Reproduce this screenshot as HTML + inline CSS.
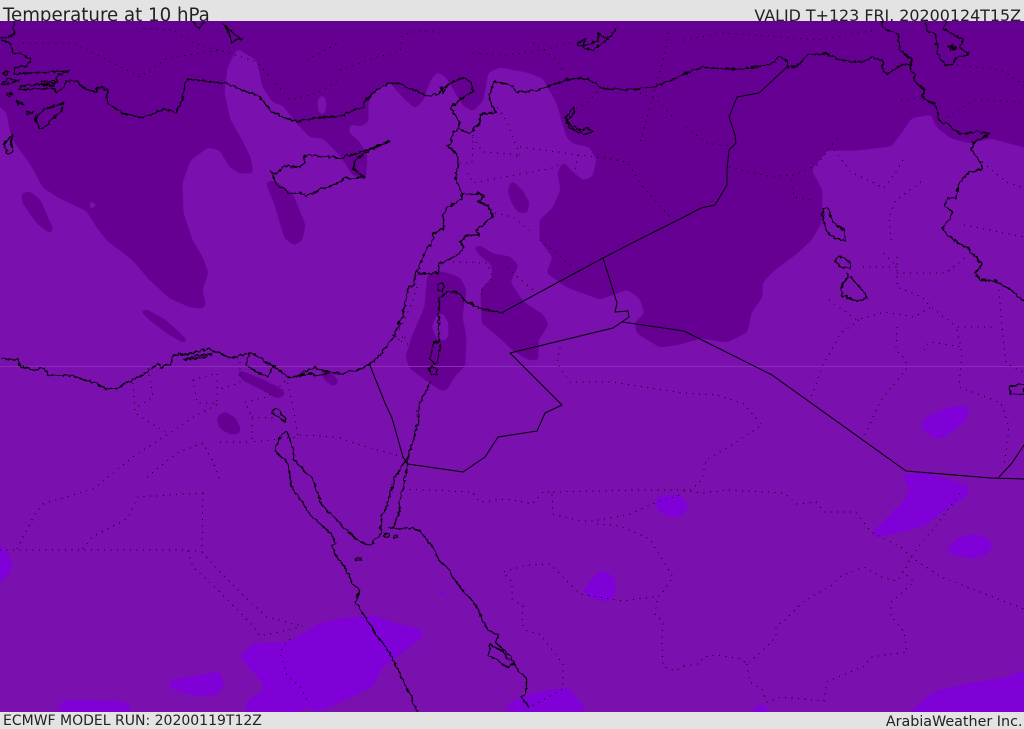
<!DOCTYPE html>
<html><head><meta charset="utf-8"><style>
html,body{margin:0;padding:0;background:#e3e3e3;width:1024px;height:729px;overflow:hidden}
svg{display:block}
.t{font-family:"DejaVu Sans",sans-serif;fill:#222}
.c path,.s path{fill:none;stroke:#000;stroke-linejoin:round}
.c path{stroke-width:1.3}
.s path{stroke-width:1}
.o path{fill:none;stroke:#0a0010;stroke-width:1;stroke-dasharray:1 5.500;shape-rendering:crispEdges}
</style></head><body>
<svg width="1024" height="729" viewBox="0 0 1024 729" xmlns="http://www.w3.org/2000/svg">
<defs>
<clipPath id="mapclip"><rect y="21" width="1024" height="691"/></clipPath>
<filter id="sd" filterUnits="userSpaceOnUse" x="-40" y="-40" width="1104" height="809" color-interpolation-filters="sRGB">
<feGaussianBlur in="SourceAlpha" stdDeviation="2"/><feComponentTransfer result="a"><feFuncA type="linear" slope="8" intercept="-2.800"/></feComponentTransfer>
<feFlood flood-color="#660092"/><feComposite in2="a" operator="in"/></filter>
<filter id="sm" filterUnits="userSpaceOnUse" x="-40" y="-40" width="1104" height="809" color-interpolation-filters="sRGB">
<feGaussianBlur in="SourceAlpha" stdDeviation="1.600"/><feComponentTransfer result="a"><feFuncA type="linear" slope="8" intercept="-2.800"/></feComponentTransfer>
<feFlood flood-color="#7a10ad"/><feComposite in2="a" operator="in"/></filter>
<filter id="sb" filterUnits="userSpaceOnUse" x="-40" y="-40" width="1104" height="809" color-interpolation-filters="sRGB">
<feGaussianBlur in="SourceAlpha" stdDeviation="2"/><feComponentTransfer result="a"><feFuncA type="linear" slope="8" intercept="-2.800"/></feComponentTransfer>
<feFlood flood-color="#8000d8"/><feComposite in2="a" operator="in"/></filter>
<filter id="w" filterUnits="userSpaceOnUse" x="-10" y="0" width="1044" height="729" color-interpolation-filters="sRGB">
<feTurbulence type="turbulence" baseFrequency="0.16" numOctaves="2" seed="4" result="n"/><feDisplacementMap in="SourceGraphic" in2="n" scale="4" xChannelSelector="R" yChannelSelector="G"/></filter>
</defs>
<rect width="1024" height="729" fill="#e3e3e3"/>
<text class="t" x="3" y="21" font-size="18.200">Temperature at 10 hPa</text>
<text class="t" x="1021" y="21" font-size="15.900" text-anchor="end">VALID T+123 FRI. 20200124T15Z</text>
<g clip-path="url(#mapclip)">
<rect y="21" width="1024" height="691" fill="#7a10ad"/>
<g filter="url(#sd)"><path d="M-30 0H1054V155L1024 147 991 138 971 143 951 138 937 127 931 114 911 118 901 133 891 146 857 150 827 150 811 170 822 190 821 223 811 240 797 253 774 270 762 283 762 297 751 313 747 332 727 342 701 338 680 344 660 347 637 333 635 323 645 313 640 298 627 289 617 293 600 299 567 287 547 273 553 257 540 240 540 220 553 208 561 190 558 173 563 162 570 170 583 181 593 177 597 160 590 147 573 143 567 137 557 103 543 78 527 72 500 67 488 72 483 100 473 111 463 105 447 78 438 71 430 80 423 100 415 108 403 97 390 82 375 88 368 103 368 122 360 126 350 124 348 132 360 143 367 157 365 180 353 175 340 155 323 138 310 137 297 123 283 105 273 102 263 87 257 60 237 48 227 67 224 93 230 120 240 137 250 157 253 173 240 173 230 167 220 150 208 147 190 160 182 183 183 213 192 240 202 257 208 273 202 290 205 303 204 308 190 307 170 298 150 280 133 260 107 240 97 227 87 211 58 197 43 187 30 163 15 143 10 130 7 113 0 106 -30 95Z"/>
<path d="M266 182L275 181 293 195 305 225 302 240 294 245 285 238 275 205ZM22 193L30 192 40 200 53 230 50 233 37 223 23 203ZM140 310L147 310 165 320 187 340 185 343 170 335 150 320ZM236 371L243 372 263 380 283 390 285 395 277 398 263 390 243 380ZM217 417L225 412 235 418 240 428 240 433 230 434 220 428ZM320 368L330 372 339 382 333 386 325 380ZM428 275L443 272 460 278 466 290 462 317 466 337 465 365 453 378 448 388 443 391 430 383 410 368 406 357 412 337 425 307 427 283ZM474 247L480 246 493 254 510 257 518 265 510 282 523 302 543 315 548 325 538 340 538 360 527 359 513 350 497 335 482 323 481 290 493 277 492 265 480 255ZM508 190L512 181 522 190 529 203 527 213 518 212 512 203Z"/></g>
<g filter="url(#sm)"><ellipse cx="322" cy="105" rx="4" ry="9"/><path d="M90 201L97 205 90 209Z"/><path d="M432 327L437 315 443 314 448 323 448 337 443 341 437 338Z"/></g>
<g filter="url(#sb)"><path d="M-20 547L0 546 8 552 12 566 8 576 0 581 -20 581ZM168 681L220 672 224 684 217 695 197 696 173 689ZM52 725L63 701 87 700 127 702 136 725ZM240 657L253 644 290 642 320 624 340 619 373 616 397 624 422 630 423 636 407 649 383 666 373 686 340 702 320 711 303 707 293 725 243 725 247 702 265 689 260 679ZM438 592L442 590 447 594 443 596ZM505 725L510 702 540 692 568 688 583 706 583 725ZM583 591L597 574 605 571 615 579 615 596 607 601 593 599ZM655 502L660 496 680 495 688 505 684 514 673 518 660 512ZM903 475L925 473 968 486 968 495 945 510 925 525 900 532 875 537 873 532 905 500 910 490ZM947 549L957 539 974 534 989 539 992 547 984 556 971 558 954 555ZM921 423L927 417 947 408 964 405 969 412 964 422 947 435 937 439 926 433ZM895 725L934 692 967 684 1001 679 1024 671 1050 660V725ZM745 725L757 705 766 706 773 725Z"/></g>
<rect y="366" width="1024" height="1" fill="#8a2cb8"/>
<g class="o">
<path d="M684 666L699 664 704 657 717 655 741 659 747 664 764 649 776 637 776 626 784 621 804 601 831 586 841 576 864 567 881 577 897 581 904 572 911 557 917 549 937 524 961 492"/>
<path d="M747 664L750 682 762 689 767 702 781 697 824 701 827 682 864 666 871 657 907 652 904 632 891 616 891 602 914 582 902 571"/>
<path d="M684 491L704 493 727 490 784 493 797 504 816 502 824 512 856 512 871 532 901 547 911 557 941 577 1024 609"/>
<path d="M403 489L472 492 480 502 507 499 532 504 543 492 552 492 553 514 580 521 593 521 630 514 657 502 680 495"/>
<path d="M597 524L620 526 650 539 660 556 673 577 660 596 623 601 580 594 550 564 527 565 503 572 512 582 512 599 523 606 522 624 527 631 540 634 563 664 563 689 530 707"/>
<path d="M657 601L655 614 663 622 662 639 663 666 675 671 684 666"/>
<path d="M560 347L557 363 570 382 613 382 684 393 717 395 744 404 762 425 727 448 706 460 702 480 690 490 640 490 552 492"/>
<path d="M340 438L360 445 403 457"/><path d="M300 435L337 437"/>
<path d="M0 550L187 550 202 552 203 489"/><path d="M17 549L35 514 43 504 93 489 107 478 133 457 197 415 220 403"/>
<path d="M83 549L92 537 127 519 138 497 203 493"/><path d="M147 477L177 453 203 443 213 462 220 480"/>
<path d="M133 383L135 413 167 433"/><path d="M148 368L153 397 135 408"/>
<path d="M193 380L217 373 217 403 197 403 193 380"/><path d="M240 362L240 383 217 390"/>
<path d="M245 402L267 397 287 380 295 417 298 437 252 442 252 417 245 402"/><path d="M220 442L252 442"/><path d="M252 417L273 418"/>
<path d="M188 551L193 567 220 592 253 626 260 636 293 629 302 626"/><path d="M202 552L217 569 250 602 267 617 302 626"/>
<path d="M290 639L280 652 287 676 300 686 308 702"/>
<path d="M23 43L73 43 123 68 140 77 167 58 220 50 257 62 290 100 317 93 340 80"/>
<path d="M137 28L173 30 193 43 230 53"/><path d="M307 60L340 42"/>
<path d="M340 70L377 57 400 52 402 35 420 30 440 33"/>
<path d="M473 53L507 55 543 50 573 42"/><path d="M533 43L557 60 562 70"/>
<path d="M597 92L587 103 573 110"/><path d="M640 93L657 100 673 117"/>
<path d="M668 33L665 53 640 143"/><path d="M598 155L627 162 643 187 670 217"/>
<path d="M686 127L707 143 729 146"/><path d="M729 167L771 177 794 175 817 165 837 138"/>
<path d="M684 40L721 33 757 35 817 40 877 30"/><path d="M791 180L794 197 814 200"/>
<path d="M901 100L921 98"/><path d="M947 117L974 100 1024 102"/><path d="M957 65L1001 70 1024 85"/>
<path d="M834 150L851 172 884 188 897 170 904 158"/><path d="M921 182L896 200 889 217 891 240"/>
<path d="M884 253L897 267 861 267"/>
<path d="M897 257L897 287 922 297 931 307 957 327 997 327"/>
<path d="M957 330L962 353 959 387 1001 403 1009 427 1004 467"/>
<path d="M897 273L946 273 966 257"/><path d="M999 290L1002 327 1006 363 1024 373"/>
<path d="M829 300L857 320 884 312 914 317 931 307"/><path d="M859 320L841 333 824 363 811 397"/>
<path d="M897 327L896 350 906 360 906 370 881 400 864 437"/><path d="M924 350L929 342 961 347"/>
<path d="M982 162L1006 182 1024 188"/><path d="M964 225L1024 237"/>
<path d="M473 135L472 163 458 163"/><path d="M472 137L483 152 520 155 513 158"/>
<path d="M520 155L507 122 497 107"/><path d="M520 147L580 155 627 162"/>
<path d="M468 173L473 183 553 168 563 162"/><path d="M578 155L575 170"/>
<path d="M495 213L513 217 533 233"/><path d="M540 240L573 267"/>
<path d="M453 262L487 263 493 277 480 292 487 300"/><path d="M507 268L533 290"/>
<path d="M417 287L410 308 400 328 393 337 407 337 397 340 410 345"/>
</g>
<g class="s">
<path d="M787 67L759 93 737 97 729 117 735 135 736 143 729 150 727 170 727 185 715 205 701 208 684 217 638 240 603 258 503 312"/>
<path d="M603 258L617 303 615 312 628 311 629 317 613 328 510 353 562 405 545 413 537 431 498 437 485 457 463 472 408 464"/>
<path d="M622 322L684 331 772 375 906 471 991 478 1024 479"/><path d="M999 477L1012 463 1024 445"/>
<path d="M369 363L385 403 392 418 403 457 408 464"/>
</g>
<g class="c" filter="url(#w)">
<path d="M13 21L13 33 7 37 0 36M0 38L10 43 12 53 20 52 30 59 25 65 13 67 13 74 23 72 68 70 55 76 57 82 20 85 18 89 53 87 55 92 63 87 65 80 75 80 83 87 95 91 98 86 108 89 105 95 108 103 122 112 132 115 142 116 163 108 175 112 183 95 183 82 188 78 223 82 257 95 273 112 295 121 313 117 340 115 347 112 355 108 362 107 365 100 375 88 390 82 400 83 405 86 427 95 438 93 443 86 453 80 463 76 470 82 472 90 460 98 450 107 459 122 457 128 469 132 478 123 479 113 495 112 490 103 488 97 493 80 512 85 515 91 535 90 553 83 573 77 587 78 600 87 627 89 657 85 684 73 701 66 727 68 744 68 769 63 779 56 786 59 787 67 796 65 807 53 824 53 844 60 861 61 871 56 882 60 881 68 886 73 901 63 910 63"/>
<path d="M503 312L480 308 465 301 458 292 447 290 438 297 438 340 432 343 429 357 433 363 437 362 439 342"/>
<path d="M428 367L432 366 437 368 435 374 430 374Z"/><path d="M430 380L418 403 417 423 408 453 393 478"/>
<path d="M437 283L440 282 443 285 441 291 437 289Z"/>
<path d="M459 122L457 128 452 132 450 143 447 145 455 152 458 163 455 172 455 180 461 193 460 198 445 208 442 217 442 228 433 232 432 240 423 253 418 267 414 272 413 284 407 287 402 315 393 335 380 353 370 363 357 369 340 373 313 367 293 376 287 376 272 365 250 352 230 357 208 348 187 353 172 354 170 363 160 367 157 363 140 375 117 387 105 388 93 382 72 375 47 374 43 367 32 369 20 366 17 359 0 357"/>
<path d="M461 193L475 193 477 191 483 195 478 200 487 205 492 215 483 223 475 230 479 234 467 234 459 240 463 247 457 253 439 263 437 272 427 273 414 272"/>
<path d="M182 358L210 352 210 354 200 357 183 359Z"/><path d="M248 353L245 364 260 373 267 375 272 365"/><path d="M293 376L312 372 313 375 328 372"/>
<path d="M272 409L277 408 285 418 285 421 272 413Z"/>
<path d="M285 430L278 437 274 450 287 463 289 480 292 489 300 500 310 515 325 528 335 540 332 545 336 556 340 561 350 576 350 581 358 589 355 602 370 626 390 654 410 696 417 712"/>
<path d="M285 430L292 447 293 458 313 480 316 490 320 503 335 518 340 524 350 534 362 542 370 544 380 532 380 517 385 506 391 489 393 478"/>
<path d="M408 453L402 489 398 501 399 509 392 526 388 526 400 528 413 527 420 531 430 544 438 559 450 571 452 577 463 591 473 602 487 629 497 634 495 642 503 649 510 656 515 666 525 677 525 692 520 696 528 706"/>
<path d="M490 642L487 654 507 666 513 662M490 644L502 650 508 660M503 663L507 667"/>
<path d="M383 534a3 2 0 1 0 6 0a3 2 0 1 0 -6 0M392 536a2 1.500 0 1 0 4 0a2 1.500 0 1 0 -4 0M354 558a3.500 1.500 0 1 0 7 0a3.500 1.500 0 1 0 -7 0"/>
<path d="M304 154L303 163 297 166 283 165 275 173 270 170 275 183 287 192 300 192 305 195 320 188 340 181 342 178 355 177 363 176 353 168 353 160 367 150 388 140 363 150 340 157 304 154Z"/>
<path d="M63 102L43 108 35 117 38 128 45 125 60 110Z"/><path d="M12 133L3 143 7 153 12 150 10 140Z"/>
<path d="M0 83L8 78 18 79 7 83Z"/><path d="M222 23L233 32 241 38 230 41 227 30Z"/><path d="M193 21L198 28 203 21"/>
<path d="M40 80L55 80 53 85 41 84ZM6 92L11 92 11 95 6 95ZM16 100L22 103 20 104 16 103ZM26 111L32 111 32 113 26 113ZM1 72L8 71 5 75Z"/>
<path d="M577 42L585 38 582 45 597 40 597 32 607 38 615 27 607 38 591 50 578 45Z"/>
<path d="M573 106L564 117 570 124 580 130 585 127 592 130 582 134 570 127 565 120 573 112Z"/>
<path d="M440 87L445 86 442 92Z"/>
<path d="M881 21L882 27 897 33 899 50 911 58 909 68 914 73 914 82 923 87 922 97 934 103 939 122 947 123 959 133 976 131 989 133 972 142 971 150 979 160 981 168 967 172 957 183 956 197 947 197 943 205 951 210 949 218 941 228 954 240 967 247 981 263 974 272 979 279 994 280 1009 288 1024 301"/>
<path d="M924 21L926 30 934 33 937 53 946 65 952 63 954 57 968 53 959 47 962 38 951 33 942 28 946 21"/>
<path d="M948 46L951 44 950 49ZM951 47L955 46 953 49Z"/>
<path d="M822 208L827 208 832 222 844 230 845 240 834 238 826 230 822 220Z"/>
<path d="M834 260L838 255 849 261 849 267 842 267Z"/>
<path d="M846 272L847 275 841 283 841 295 857 300 866 297 865 292 854 282 849 275"/>
<path d="M1008 385L1024 383V393L1009 393Z"/>
</g>
</g>
<rect y="712" width="1024" height="17" fill="#e3e3e3"/>
<text class="t" x="3" y="725" font-size="14">ECMWF MODEL RUN: 20200119T12Z</text>
<text class="t" x="1022.500" y="726" font-size="14.300" text-anchor="end">ArabiaWeather Inc.</text>
</svg>
</body></html>
